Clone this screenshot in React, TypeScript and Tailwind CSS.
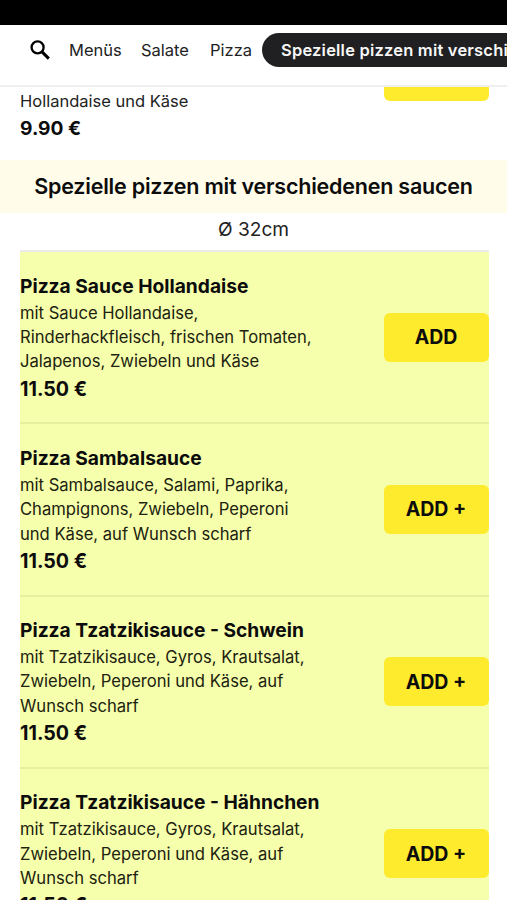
type Dish = {
  name: string;
  lines: string[];
  price: string;
  action: string;
};

const dishes: Dish[] = [
  {
    name: "Pizza Sauce Hollandaise",
    lines: ["mit Sauce Hollandaise,", "Rinderhackfleisch, frischen Tomaten,", "Jalapenos, Zwiebeln und Käse"],
    price: "11.50 €",
    action: "ADD",
  },
  {
    name: "Pizza Sambalsauce",
    lines: ["mit Sambalsauce, Salami, Paprika,", "Champignons, Zwiebeln, Peperoni", "und Käse, auf Wunsch scharf"],
    price: "11.50 €",
    action: "ADD +",
  },
  {
    name: "Pizza Tzatzikisauce - Schwein",
    lines: ["mit Tzatzikisauce, Gyros, Krautsalat,", "Zwiebeln, Peperoni und Käse, auf", "Wunsch scharf"],
    price: "11.50 €",
    action: "ADD +",
  },
  {
    name: "Pizza Tzatzikisauce - Hähnchen",
    lines: ["mit Tzatzikisauce, Gyros, Krautsalat,", "Zwiebeln, Peperoni und Käse, auf", "Wunsch scharf"],
    price: "11.50 €",
    action: "ADD +",
  },
];

function SearchIcon() {
  return (
    <svg className="size-[20px] shrink-0" viewBox="0 0 20 20" fill="none" stroke="#000">
      <circle cx="7.6" cy="7.4" r="6" strokeWidth="2.3" />
      <path d="M11.8 11.6L18.8 18.6" strokeWidth="3" />
    </svg>
  );
}

function CategoryNav() {
  return (
    <nav className="flex h-[62px] shrink-0 items-start overflow-hidden border-b-2 border-[#efefef] bg-white pt-2 pl-[30px] text-[16.5px] whitespace-nowrap text-[#222]">
      <div className="flex h-[34px] items-center">
        <SearchIcon />
        <a className="ml-[19px] w-[72px]">Menüs</a>
        <a className="w-[69px]">Salate</a>
        <a className="w-[52px]">Pizza</a>
        <a className="flex h-[34px] items-center rounded-full bg-[#202022] px-[19px] font-semibold tracking-[0.2px] text-[#f7f7f7]">
          Spezielle pizzen mit verschiedenen saucen
        </a>
      </div>
    </nav>
  );
}

function DishRow({ dish }: { dish: Dish }) {
  return (
    <article className="flex h-[172.25px] shrink-0 items-center justify-between border-t-2 border-[#e5ef9d] bg-[#f6ffab] first:border-[#ebebeb]">
      <div className="pt-px whitespace-nowrap">
        <h3 className="text-[19.2px] leading-[28px] font-bold">{dish.name}</h3>
        <p className="pt-px text-[16.6px] leading-[24.4px] text-[#20220f]">
          {dish.lines.map((line) => (
            <span key={line} className="block">{line}</span>
          ))}
        </p>
        <p className="pt-px text-[19.6px] leading-[29px] font-bold">{dish.price}</p>
      </div>
      <button className="h-[49px] w-[105px] shrink-0 rounded-md bg-[#ffeb2d] pt-px text-[19.5px] font-bold">
        {dish.action}
      </button>
    </article>
  );
}

export default function App() {
  return (
    <div className="flex h-[900px] w-[507px] flex-col overflow-hidden bg-white font-['Inter',sans-serif] text-[#0c0c0c]">
      <div className="h-[25px] shrink-0 bg-black" />
      <CategoryNav />

      {/* tail of the previous category */}
      <section className="flex h-[73px] shrink-0 items-start justify-between pr-[18.5px] pl-5">
        <div className="pt-[2px]">
          <p className="text-[16.5px] leading-[24.4px] text-[#222]">Hollandaise und Käse</p>
          <p className="pt-px text-[19.2px] leading-[28px] font-bold">9.90 €</p>
        </div>
        <div className="h-[14px] w-[105px] rounded-b-md bg-[#ffeb2d]" />
      </section>

      <h2 className="flex h-[53px] shrink-0 items-center justify-center bg-[#fffde9] text-[21.5px] font-semibold tracking-[-0.22px] whitespace-nowrap">
        Spezielle pizzen mit verschiedenen saucen
      </h2>
      <p className="h-[37px] shrink-0 pt-px text-center text-[19.1px] leading-[30px] text-[#222]">Ø 32cm</p>

      <main className="flex flex-col pr-[18.5px] pl-5">
        {dishes.map((dish) => (
          <DishRow key={dish.name} dish={dish} />
        ))}
      </main>
    </div>
  );
}
